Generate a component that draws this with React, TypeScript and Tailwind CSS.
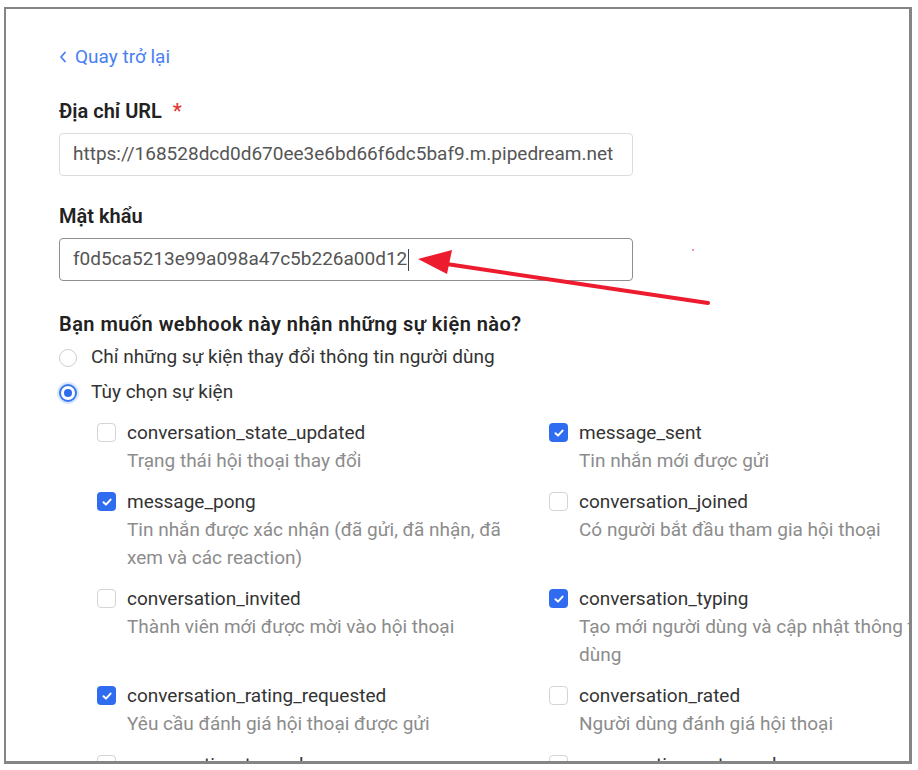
import React from "react";

type Ev = { name: string; desc: string; checked: boolean };

const rows: [Ev, Ev][] = [
  [
    { name: "conversation_state_updated", desc: "Trạng thái hội thoại thay đổi", checked: false },
    { name: "message_sent", desc: "Tin nhắn mới được gửi", checked: true },
  ],
  [
    { name: "message_pong", desc: "Tin nhắn được xác nhận (đã gửi, đã nhận, đã xem và các reaction)", checked: true },
    { name: "conversation_joined", desc: "Có người bắt đầu tham gia hội thoại", checked: false },
  ],
  [
    { name: "conversation_invited", desc: "Thành viên mới được mời vào hội thoại", checked: false },
    { name: "conversation_typing", desc: "Tạo mới người dùng và cập nhật thông tin người dùng", checked: true },
  ],
  [
    { name: "conversation_rating_requested", desc: "Yêu cầu đánh giá hội thoại được gửi", checked: true },
    { name: "conversation_rated", desc: "Người dùng đánh giá hội thoại", checked: false },
  ],
  [
    { name: "conversation_tagged", desc: "Hội thoại được gắn thẻ", checked: false },
    { name: "conversation_untagged", desc: "Hội thoại được gỡ thẻ", checked: false },
  ],
];

function Checkbox({ checked }: { checked: boolean }) {
  if (checked) {
    return (
      <div className="mt-[4px] flex h-[19px] w-[19px] shrink-0 items-center justify-center rounded-[4px] bg-[#2f6cf0]">
        <svg width="12" height="12" viewBox="0 0 12 12" fill="none">
          <path d="M2.5 6.2 L5 8.6 L9.6 3.6" stroke="white" strokeWidth="2" strokeLinecap="round" strokeLinejoin="round" />
        </svg>
      </div>
    );
  }
  return <div className="mt-[4px] h-[19px] w-[19px] shrink-0 rounded-[4px] border border-[#d4d4d4] bg-white" />;
}

function EventItem({ ev, wide }: { ev: Ev; wide?: boolean }) {
  return (
    <div className="flex gap-[11px]">
      <Checkbox checked={ev.checked} />
      <div className={wide ? "w-[450px] shrink-0" : "w-[400px] shrink-0"}>
        <div className="text-[19px] leading-[28px] text-[#333333]">{ev.name}</div>
        <div className="text-[19px] leading-[28px] text-[#8c8c8c]">{ev.desc}</div>
      </div>
    </div>
  );
}

export default function App() {
  return (
    <div className="relative h-[770px] w-[918px] overflow-hidden bg-white" style={{ fontFamily: "Roboto, 'Noto Sans', sans-serif" }}>
      <div className="ml-[4px] mt-[7px] h-[757px] w-[908px] overflow-hidden border-b-[3px] border-l-2 border-r-[3px] border-t-2 border-[#858585] bg-white">
        <div className="pl-[53px] pt-[36px]">
          <div className="flex h-[24px] items-center gap-[8px] text-[19px] text-[#4a7ff2]">
            <svg width="8" height="12" viewBox="0 0 8 12" fill="none">
              <path d="M6 1.5 L2 6 L6 10.5" stroke="#4a7ff2" strokeWidth="1.8" strokeLinecap="round" strokeLinejoin="round" />
            </svg>
            <span>Quay trở lại</span>
          </div>

          <div className="mt-[30px] flex h-[24px] items-center text-[20px] font-semibold text-[#222222]">
            Địa chỉ URL<span className="ml-[11px] text-[#e53935]">*</span>
          </div>
          <div className="mt-[10px] flex h-[43px] w-[574px] items-center rounded-[4px] border border-[#dcdcdc] pl-[13px] text-[19px] text-[#555555]">
            https://168528dcd0d670ee3e6bd66f6dc5baf9.m.pipedream.net
          </div>

          <div className="mt-[28px] flex h-[24px] items-center text-[20px] font-semibold text-[#222222]">Mật khẩu</div>
          <div className="mt-[10px] flex h-[43px] w-[574px] items-center rounded-[4px] border border-[#8f8f8f] pl-[13px] text-[19px] text-[#555555]">
            <span>f0d5ca5213e99a098a47c5b226a00d12</span>
            <span className="ml-[1px] h-[22px] w-px bg-[#444444]" />
          </div>

          <div className="mt-[31px] flex h-[24px] items-center text-[20px] font-semibold tracking-[0.45px] text-[#222222]">
            Bạn muốn webhook này nhận những sự kiện nào?
          </div>
          <div className="mt-[4px] flex h-[35px] items-center gap-[14px] text-[19px] text-[#333333]">
            <div className="h-[18px] w-[18px] rounded-full border border-[#cfcfcf] bg-white" />
            <span>Chỉ những sự kiện thay đổi thông tin người dùng</span>
          </div>
          <div className="flex h-[35px] items-center gap-[14px] text-[19px] text-[#333333]">
            <div className="flex h-[18px] w-[18px] items-center justify-center rounded-full border-2 border-[#3a78f2] bg-white shadow-[0_0_0_2px_rgba(58,120,242,0.18)]">
              <div className="h-[8px] w-[8px] rounded-full bg-[#2f6cf0]" />
            </div>
            <span>Tùy chọn sự kiện</span>
          </div>

          <div className="ml-[38px] mt-[9px] flex flex-col gap-[13px]">
            {rows.map((r, i) => (
              <div key={i} className="grid grid-cols-[452px_480px]">
                <EventItem ev={r[0]} />
                <EventItem ev={r[1]} wide />
              </div>
            ))}
          </div>
        </div>
      </div>

      <svg className="pointer-events-none absolute left-0 top-0" width="918" height="770" viewBox="0 0 918 770">
        <line x1="708" y1="303" x2="440" y2="263" stroke="#ec1c2e" strokeWidth="4" strokeLinecap="round" />
        <polygon points="418,259 452,250 447,274" fill="#ec1c2e" />
        <circle cx="693" cy="250" r="0.8" fill="#ec1c2e" />
      </svg>
    </div>
  );
}
